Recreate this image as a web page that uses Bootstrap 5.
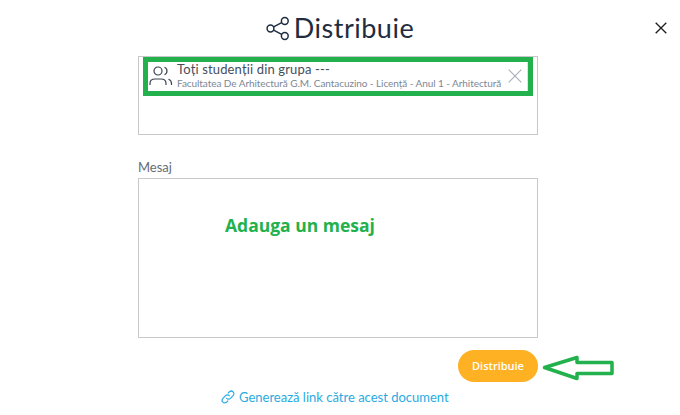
<!DOCTYPE html>
<html lang="en">
<head>
  <meta charset="UTF-8" />
  <meta name="viewport" content="width=device-width, initial-scale=1.0"/>
  <title>Distribuie</title>
  <link href="https://cdn.jsdelivr.net/npm/bootstrap@5.3.3/dist/css/bootstrap.min.css" rel="stylesheet">
  <style>
    body { background: #fff; font-family: Lato, "Open Sans", sans-serif; overflow: hidden; }
    .share-modal { width: 680px; height: 415px; position: relative; }
    .share-close { position: absolute; top: 22px; right: 13px; background: none; border: 0; padding: 0; line-height: 0; }
    .share-head { height: 56px; color: #1e2d40; font-size: 27px; letter-spacing: .5px; }
    .share-column { width: 400px; margin-left: 138px; }
    .target-box { height: 79px; border: 1px solid #c8c8c8; position: relative; }
    .target-chip { position: absolute; top: 0; left: 4px; right: 4px; height: 39px; border: 5px solid #22b14c; background: #fff; padding: 0 0 2px 1px; }
    .target-chip::after { content: ""; position: absolute; top: 0; bottom: 0; right: 0; width: 1px; background: #dfe3e8; }
    .target-name { font-size: 13px; line-height: 15px; color: #434e5b; letter-spacing: .15px; }
    .target-sub { font-size: 10px; line-height: 12px; color: #7d8794; letter-spacing: -.06px; white-space: nowrap; }
    .target-x { position: absolute; top: 7px; right: 6px; line-height: 0; }
    .msg-label { font-size: 13px; color: #666d75; line-height: 16px; margin-top: 24px; margin-bottom: 3px; }
    .msg-box { height: 160px; border: 1px solid #c8c8c8; position: relative; }
    .msg-note { position: absolute; left: 86px; top: 35px; color: #22b14c; font: 700 17.500px/22px "Open Sans", sans-serif; }
    .send-row { margin-top: 12px; position: relative; }
    .send-btn { width: 80px; height: 32px; border-radius: 16px; background: #ffb124; border: 0; color: #fff; font: 600 11px/32px "Open Sans", sans-serif; padding: 0; }
    .send-arrow { position: absolute; left: 404px; top: 5px; }
    .link-row { margin-top: 6px; color: #29abe2; font-size: 13px; line-height: 18px; text-decoration: none; margin-left: 83px; }
  </style>
</head>
<body>
  <div class="share-modal">
    <button class="share-close" type="button" aria-label="Close">
      <svg width="12" height="12" viewBox="0 0 12 12" fill="none" stroke="#1b1b1b" stroke-width="1.3"><path d="M.7.7l10.6 10.6M11.3.7L.7 11.3"/></svg>
    </button>

    <div class="share-head d-flex align-items-center justify-content-center gap-1">
      <svg width="24" height="25" viewBox="0 0 24 25" fill="none" stroke="#1e2d40" stroke-width="1.5">
        <circle cx="4.5" cy="12.5" r="3.4"/>
        <circle cx="18.8" cy="5" r="3.4"/>
        <circle cx="18.8" cy="20" r="3.4"/>
        <path d="M7.6 10.9l8.1-4.2M7.6 14.1l8.1 4.3"/>
      </svg>
      <span>Distribuie</span>
    </div>

    <div class="share-column">
      <div class="target-box">
        <div class="target-chip d-flex align-items-center gap-1">
          <svg width="24" height="22" viewBox="0 0 24 22" fill="none" stroke="#3a4552" stroke-width="1.2" class="flex-shrink-0">
            <circle cx="9" cy="6" r="4"/>
            <path d="M1 20v-1.500c0-3 2-4.500 5-4.500h6c3 0 5 1.500 5 4.500V20"/>
            <path d="M15.500 2.300a4 4 0 0 1 0 7.400M19.500 14.300c2 .7 3 2.200 3 4.200V20"/>
          </svg>
          <div>
            <div class="target-name">Toți studenții din grupa ---</div>
            <div class="target-sub">Facultatea De Arhitectură G.M. Cantacuzino - Licență - Anul 1 - Arhitectură</div>
          </div>
          <span class="target-x">
            <svg width="14" height="14" viewBox="0 0 14 14" fill="none" stroke="#a9b1bb" stroke-width="1.2"><path d="M.7.7l12.600 12.600M13.300.7L.7 13.300"/></svg>
          </span>
        </div>
      </div>

      <div class="msg-label">Mesaj</div>
      <div class="msg-box">
        <div class="msg-note">Adauga un mesaj</div>
      </div>

      <div class="send-row d-flex justify-content-end">
        <button class="send-btn" type="button">Distribuie</button>
        <svg class="send-arrow" width="72" height="26" viewBox="0 0 72 26" fill="none" stroke="#22b14c" stroke-width="3.500">
          <path d="M2.500 12.500L35 2.500v5h35v11H35V23.500z" stroke-linejoin="round"/>
        </svg>
      </div>

      <a href="#" class="link-row d-inline-flex align-items-center gap-1">
        <svg width="14" height="14" viewBox="0 0 16 16" fill="none" stroke="#29abe2" stroke-width="1.400" stroke-linecap="round">
          <path d="M6.500 9.500a3 3 0 0 0 4.300 0l3-3a3 3 0 0 0-4.300-4.300L8.300 3.400"/>
          <path d="M9.500 6.500a3 3 0 0 0-4.300 0l-3 3a3 3 0 0 0 4.300 4.300l1.200-1.200"/>
        </svg>
        Generează link către acest document
      </a>
    </div>
  </div>
  <script src="https://cdn.jsdelivr.net/npm/bootstrap@5.3.3/dist/js/bootstrap.bundle.min.js"></script>
</body>
</html>
